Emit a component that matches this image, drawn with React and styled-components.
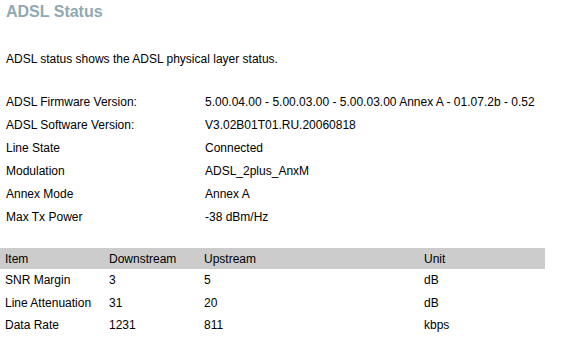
import React from 'react'
import styled, { createGlobalStyle } from 'styled-components'

const GlobalStyle = createGlobalStyle`
  body {
    margin: 0;
    background: #ffffff;
    font-family: "Liberation Sans", Arial, sans-serif;
    font-size: 12px;
    color: #000000;
  }
`

const Page = styled.div`
  width: 564px;
  height: 337px;
  overflow: hidden;
`

const Title = styled.h1`
  margin: 0;
  padding: 3px 6px 0;
  height: 22px;
  font-size: 16px;
  font-weight: bold;
  color: #8fa9b3;
`

const Intro = styled.p`
  margin: 27px 0 0;
  padding: 0 6px;
  line-height: 14px;
`

const InfoList = styled.div`
  display: grid;
  grid-template-columns: 199px 1fr;
  grid-auto-rows: 23px;
  align-items: center;
  margin-top: 24px;
  padding: 0 6px;
`

const StatsTable = styled.div`
  margin-top: 20px;
  width: 545px;
`

const StatsRow = styled.div`
  display: grid;
  grid-template-columns: 104px 95px 220px 1fr;
  height: ${p => (p.$head ? '21px' : '22.5px')};
  align-items: center;
  padding-left: 5px;
  background: ${p => (p.$head ? '#cccccc' : 'transparent')};
`

const info = [
  ['ADSL Firmware Version:', '5.00.04.00 - 5.00.03.00 - 5.00.03.00 Annex A - 01.07.2b - 0.52'],
  ['ADSL Software Version:', 'V3.02B01T01.RU.20060818'],
  ['Line State', 'Connected'],
  ['Modulation', 'ADSL_2plus_AnxM'],
  ['Annex Mode', 'Annex A'],
  ['Max Tx Power', '-38 dBm/Hz'],
]

const stats = [
  ['SNR Margin', '3', '5', 'dB'],
  ['Line Attenuation', '31', '20', 'dB'],
  ['Data Rate', '1231', '811', 'kbps'],
]

export default function App() {
  return (
    <Page>
      <GlobalStyle />
      <Title>ADSL Status</Title>
      <Intro>ADSL status shows the ADSL physical layer status.</Intro>
      <InfoList>
        {info.map(([k, v]) => (
          <React.Fragment key={k}>
            <span>{k}</span>
            <span>{v}</span>
          </React.Fragment>
        ))}
      </InfoList>
      <StatsTable>
        <StatsRow $head>
          <span>Item</span>
          <span>Downstream</span>
          <span>Upstream</span>
          <span>Unit</span>
        </StatsRow>
        {stats.map(r => (
          <StatsRow key={r[0]}>
            {r.map((c, i) => (
              <span key={i}>{c}</span>
            ))}
          </StatsRow>
        ))}
      </StatsTable>
    </Page>
  )
}
